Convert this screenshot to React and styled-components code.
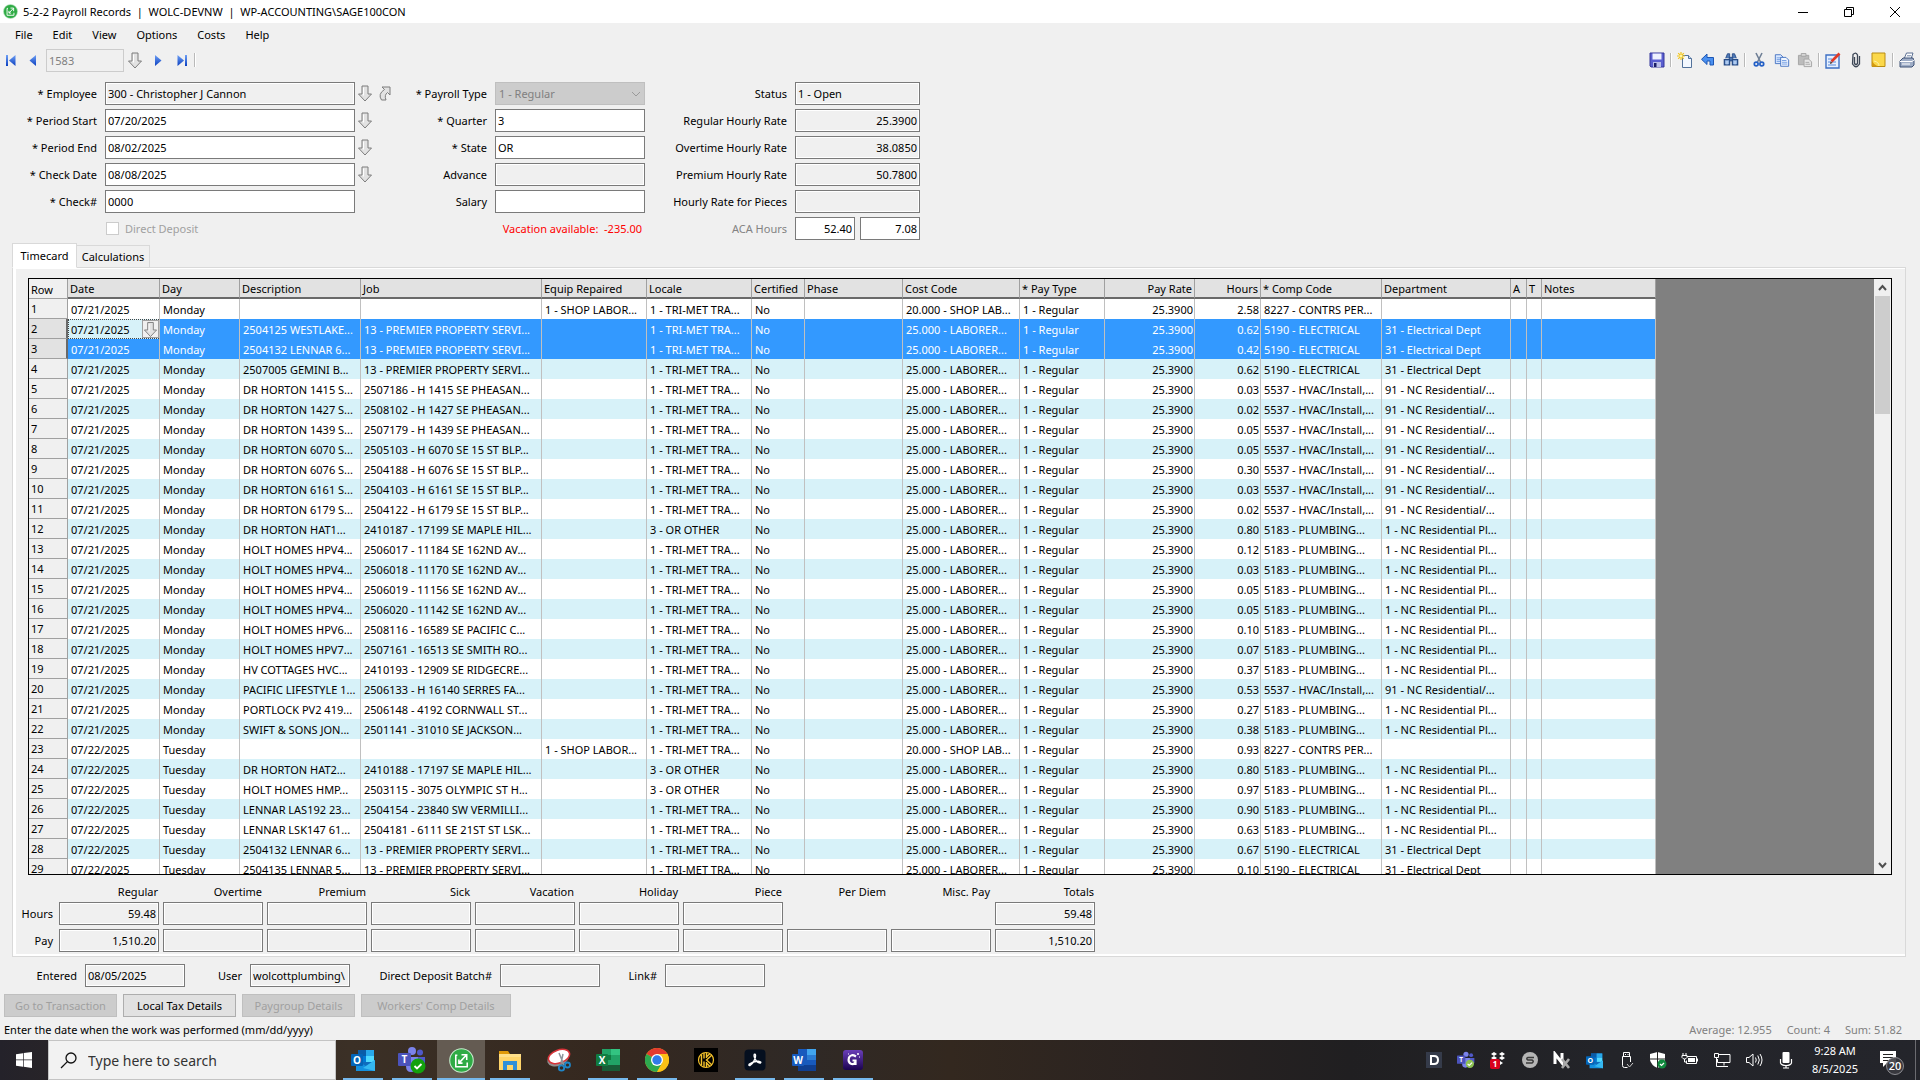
import React from "react";
import styled, { createGlobalStyle, css } from "styled-components";

const Global = createGlobalStyle`
  * { box-sizing: border-box; }
  body { margin: 0; background: #f0f0f0; }
  body, button, input, select, table {
    font-family: "Noto Sans", "Open Sans", sans-serif;
    font-size: 11px;
    line-height: 16px;
    color: #000;
  }
`;

const Window = styled.div`
  display: flex;
  flex-direction: column;
  height: 100vh;
  overflow: hidden;
  background: #f0f0f0;
  white-space: pre;
`;

/* ---------- title, menu, toolbar ---------- */
const TitleBar = styled.header`
  display: flex;
  align-items: center;
  flex: none;
  height: 23px;
  padding-left: 3px;
  gap: 5px;
  background: #fff;
`;
const Title = styled.h1`
  flex: 1;
  margin: 0;
  font-size: 11px;
  font-weight: 400;
`;
const CaptionButtons = styled.div`
  display: flex;
  padding-right: 2px;
`;
const CaptionButton = styled.button`
  display: flex;
  align-items: center;
  justify-content: center;
  width: 46px;
  height: 20px;
  padding: 0;
  border: 0;
  background: none;
`;
const MenuBar = styled.nav`
  display: flex;
  align-items: center;
  flex: none;
  height: 24px;
  padding-left: 5px;
`;
const MenuItem = styled.button`
  padding: 0 10px;
  border: 0;
  background: none;
`;
const Toolbar = styled.div`
  display: flex;
  align-items: center;
  flex: none;
  height: 26px;
  padding: 0 2px;
`;
const ToolButton = styled.button`
  display: flex;
  align-items: center;
  justify-content: center;
  flex: none;
  width: ${(p) => p.$w || 23}px;
  height: 22px;
  padding: 0;
  border: 0;
  background: none;
`;
const ToolSeparator = styled.span`
  width: 1px;
  height: 14px;
  margin: 0 2px;
  background: #b9b9b9;
  box-shadow: 1px 0 #fff;
`;
const Spacer = styled.span`
  flex: 1;
`;

/* ---------- fields ---------- */
const Field = styled.input`
  display: block;
  width: ${(p) => (p.$w ? `${p.$w}px` : "100%")};
  height: 23px;
  min-width: 0;
  padding: 0 2px;
  border: 1px solid #7a7a7a;
  border-radius: 0;
  outline: none;
  background: #fff;
  text-align: ${(p) => (p.$right ? "right" : "left")};
  ${(p) => p.readOnly && css`background: #f0f0f0; box-shadow: inset 0 0 0 1px #fff;`}
  &:disabled { border-color: #ccc; color: #808080; background: #f0f0f0; }
`;
const Label = styled.label`
  padding-right: 8px;
  text-align: right;
  color: ${(p) => (p.$muted ? "#838383" : "#000")};
`;
const Form = styled.section`
  display: flex;
  flex: none;
  padding-top: 9px;
`;
const FormColumn = styled.div`
  display: grid;
  grid-template-columns: ${(p) => p.$cols};
  grid-auto-rows: 23px;
  row-gap: 4px;
  align-items: center;
`;
const Lookups = styled.div`
  display: flex;
`;
const LookupButton = styled.button`
  display: flex;
  align-items: center;
  justify-content: center;
  width: 20px;
  height: 20px;
  padding: 0;
  border: 0;
  background: none;
`;
const SelectBox = styled.span`
  display: grid;
  align-items: center;
  height: 23px;
  > * { grid-area: 1 / 1; }
  > svg { justify-self: end; margin-right: 4px; }
`;
const Select = styled.select`
  width: 100%;
  height: 23px;
  padding: 0 3px;
  appearance: none;
  border: 1px solid #bfbfbf;
  border-radius: 0;
  background: #ccc;
  color: #808080;
  opacity: 1;
`;
const Notice = styled.span`
  padding-right: 3px;
  text-align: right;
  color: #f00;
`;
const CheckLabel = styled.label`
  display: flex;
  align-items: center;
  gap: 6px;
  color: #a0a0a0;
`;
const CheckBox = styled.input`
  width: 13px;
  height: 13px;
  margin: 0 0 0 1px;
  appearance: none;
  border: 1px solid #ccc;
  background: #fff;
`;
const Pair = styled.div`
  display: flex;
  gap: 5px;
`;

/* ---------- tabs and panel ---------- */
const Tabs = styled.div`
  display: flex;
  align-items: flex-end;
  flex: none;
  margin: 3px 0 -1px 12px;
`;
const Tab = styled.button`
  position: relative;
  height: ${(p) => (p.$active ? 25 : 23)}px;
  width: ${(p) => (p.$active ? 65 : 73)}px;
  padding: 0;
  border: 1px solid #d9d9d9;
  border-left-width: ${(p) => (p.$active ? 1 : 0)}px;
  border-bottom-color: ${(p) => (p.$active ? "#fff" : "#d9d9d9")};
  background: ${(p) => (p.$active ? "#fff" : "#f0f0f0")};
`;
const Panel = styled.section`
  display: flex;
  flex: 1;
  flex-direction: column;
  min-height: 0;
  margin: 0 14px 0 12px;
  padding: 10px 13px 0 12px;
  border: 1px solid #d9d9d9;
  box-shadow: inset 0 -2px #fff, inset 3px 1px #fff;
`;
const GridFrame = styled.div`
  display: flex;
  flex: 1;
  min-height: 0;
  margin-left: 3px;
  border: 1px solid #000;
  background: #808080;
`;
const GridView = styled.div`
  flex: 1;
  overflow: hidden;
`;
const Table = styled.table`
  width: 1627px;
  table-layout: fixed;
  border-collapse: separate;
  border-spacing: 0;
`;
const HeadCell = styled.th`
  height: 20px;
  padding: 2px 2px 0;
  overflow: hidden;
  border-right: 1px solid #a0a0a0;
  border-bottom: 2px solid #696969;
  background: #e2e2e2;
  font-weight: 400;
  text-align: ${(p) => (p.$right ? "right" : "left")};
  ${(p) => p.$corner && css`background: #f0f0f0; border-bottom: 1px solid #a0a0a0;`}
`;
const RowHead = styled.th`
  height: 20px;
  padding: 0 2px;
  border-right: 1px solid #a0a0a0;
  border-bottom: 1px solid #a0a0a0;
  background: #f0f0f0;
  font-weight: 400;
  text-align: left;
  ${(p) => p.$selected && css`background: #e2e2e2; border-right: 2px solid #696969;`}
`;
const Cell = styled.td`
  height: 20px;
  padding: ${(p) => (p.$right ? "2px 1px 0 0" : p.$edit ? "0" : "2px 0 0 3px")};
  overflow: hidden;
  border-right: 1px solid #c0c0c0;
  text-align: ${(p) => (p.$right ? "right" : "left")};
`;
const Row = styled.tr`
  > td { background: #fff; }
  &:nth-child(even) > td { background: #d7f2f9; }
  &&[aria-selected="true"] > td { background: #39f; color: #fff; }
`;
const CellEditor = styled.div`
  display: flex;
  height: 20px;
  border: 1px dotted #444;
  border-right: 0;
  background: #d7f2f9;
`;
const CellInput = styled.input`
  flex: 1;
  min-width: 0;
  padding: 1px 2px 0;
  border: 0;
  outline: none;
  background: none;
`;
const CellButton = styled.button`
  display: flex;
  align-items: center;
  justify-content: center;
  width: 17px;
  padding: 0;
  border: 1px solid #a0a0a0;
  background: #f0f0f0;
`;
const ScrollBar = styled.div`
  display: flex;
  flex-direction: column;
  align-items: center;
  width: 17px;
  background: #f0f0f0;
`;
const ScrollArrow = styled.button`
  display: flex;
  align-items: center;
  justify-content: center;
  width: 17px;
  height: 17px;
  padding: 0;
  border: 0;
  background: none;
`;
const ScrollThumb = styled.div`
  width: 15px;
  height: 118px;
  background: #cdcdcd;
`;

/* ---------- totals and footer ---------- */
const Totals = styled.table`
  width: 1076px;
  margin: 6px 0 0 -6px;
  flex: none;
  table-layout: fixed;
  border-collapse: separate;
  border-spacing: 0;
  align-self: flex-start;
  th { font-weight: 400; text-align: right; }
  td { padding: 0 0 4px 4px; }
  thead th { height: 21px; padding: 0 1px 0 0; }
  tbody th { padding: 0 2px 4px 0; }
`;
const Footer = styled.section`
  display: flex;
  align-items: center;
  flex: none;
  height: 37px;
`;
const FooterLabel = styled(Label)`
  width: ${(p) => p.$w}px;
`;
const Actions = styled.div`
  display: flex;
  flex: none;
  gap: 6px;
  padding-left: 4px;
`;
const Action = styled.button`
  width: ${(p) => p.$w || 113}px;
  height: 23px;
  padding: 0;
  border: 1px solid #adadad;
  background: #e1e1e1;
  &:disabled { border-color: #bfbfbf; background: #ccc; color: #a0a0a0; }
`;
const StatusBar = styled.footer`
  display: flex;
  align-items: center;
  flex: none;
  gap: 15px;
  height: 23px;
  padding: 3px 18px 0 4px;
  color: #808080;
`;
const Hint = styled.span`
  flex: 1;
  color: #000;
`;

/* ---------- task bar ---------- */
const TaskBar = styled.div`
  display: flex;
  flex: none;
  height: 40px;
  background: linear-gradient(90deg, #24222a 0, #2c2625 120px, #3b3026 350px, #35281f 600px, #2f2926 800px, #33281f 950px, #2a2321 1150px, #201f21 1350px, #232429 1600px, #24252b);
`;
const StartButton = styled.button`
  display: flex;
  align-items: center;
  justify-content: center;
  width: 48px;
  padding: 0;
  border: 0;
  background: none;
`;
const SearchBox = styled.label`
  display: flex;
  align-items: center;
  gap: 11px;
  width: 288px;
  padding-left: 11px;
  border: 1px solid #c4c4c4;
  background: #f2f2f2;
`;
const SearchInput = styled.input`
  flex: 1;
  min-width: 0;
  padding: 2px 0 0;
  border: 0;
  outline: none;
  background: none;
  font-size: 14px;
  line-height: 20px;
  &::placeholder { color: #333; opacity: 1; }
`;
const Apps = styled.div`
  display: flex;
  flex: 1;
  gap: 1px;
  padding-left: 3px;
`;
const AppButton = styled.button`
  display: flex;
  align-items: center;
  justify-content: center;
  width: 48px;
  padding: 2px 0 0;
  border: 0;
  border-bottom: 2px solid transparent;
  background: ${(p) => (p.$active ? "#645b52" : "none")};
  ${(p) => p.$running && css`
    background-image: linear-gradient(#76b9ed, #76b9ed);
    background-repeat: no-repeat;
    background-origin: border-box;
    background-clip: border-box;
    background-position: center bottom;
    background-size: ${p.$active ? "100%" : "40px"} 2px;
  `}
`;
const Tray = styled.div`
  display: flex;
  align-items: center;
`;
const TrayButton = styled.button`
  display: flex;
  align-items: center;
  justify-content: center;
  width: 32px;
  height: 40px;
  padding: 0;
  border: 0;
  background: none;
`;
const Clock = styled.time`
  width: 66px;
  line-height: 18px;
  text-align: center;
  color: #fff;
`;
const Notifications = styled.button`
  display: flex;
  align-items: center;
  justify-content: flex-end;
  width: 48px;
  height: 40px;
  padding: 3px 9px 0 0;
  border: 0;
  border-right: 1px solid #6b6b70;
  margin-right: 4px;
  background: none;
`;

const iconFont = '"Open Sans", sans-serif';

/* ---------- icons ---------- */
const SageIcon = ({ size }) => (
  <svg width={size} height={size} viewBox="0 0 24 24">
    <circle cx="12" cy="12" r="11.3" fill="#2fab45" stroke="#c9ecd0" strokeWidth="1" />
    <path d="M8 7H6.500v11h11v-4" fill="none" stroke="#fff" strokeWidth="1.500" />
    <path d="M9.500 14.500 16.500 7M12 6.500h5v5M9.500 11v3.500H13" fill="none" stroke="#fff" strokeWidth="1.500" />
  </svg>
);
const DownArrow = () => (
  <svg width="16" height="17" viewBox="0 0 16 17">
    <path d="M5 1h6v8h3.500L8 16 1.500 9H5z" fill="#e2e2e2" stroke="#7d7d7d" />
    <path d="M6.500 2.500v8" stroke="#fff" />
  </svg>
);
const JumpArrow = () => (
  <svg width="14" height="17" viewBox="0 0 14 17">
    <path d="M4 2h8v8L9.500 7.500Q6 10 8 15H3.500Q-.5 9 6.500 4.500z" fill="#e2e2e2" stroke="#7d7d7d" />
  </svg>
);
const Chevron = () => (
  <svg width="10" height="6" viewBox="0 0 10 6"><path d="M1 1l4 4 4-4" fill="none" stroke="#9a9a9a" /></svg>
);
const NavIcon = ({ bar, flip }) => (
  <svg width="12" height="13" viewBox="0 0 12 13">
    <defs><linearGradient id="nav" x2="0" y2="1"><stop offset="0" stopColor="#6fa0f5" /><stop offset="1" stopColor="#0a3fc0" /></linearGradient></defs>
    <g transform={flip ? "matrix(-1 0 0 1 12 0)" : undefined}>
      {bar && <path d="M1 1h2v11H1z" fill="url(#nav)" />}
      <path d={bar ? "M10.500 1v11L4 6.500z" : "M9 1v11L2.500 6.500z"} fill="url(#nav)" />
    </g>
  </svg>
);
const SaveIcon = () => (
  <svg width="16" height="16" viewBox="0 0 16 16">
    <path d="M1 1h14v14H2l-1-1z" fill="#5a5fd0" stroke="#34379a" />
    <path d="M3.500 1.500h9v6h-9z" fill="#eef1ff" /><path d="M4 10h8v5H4z" fill="#b9bde8" /><path d="M5 11h2.500v4H5z" fill="#1b1e66" />
  </svg>
);
const NewIcon = () => (
  <svg width="16" height="16" viewBox="0 0 16 16">
    <path d="M5.500 3.500h6l3 3v9h-9z" fill="#f3f8ff" stroke="#53729b" /><path d="M11.500 3.500v3h3" fill="#c5d8ef" stroke="#53729b" />
    <path d="M4 0v8M0 4h8M1.200 1.200l5.600 5.600M6.800 1.200 1.200 6.800" stroke="#f2c418" strokeWidth="1.200" /><circle cx="4" cy="4" r="1.500" fill="#fff6a8" />
  </svg>
);
const UndoIcon = () => (
  <svg width="16" height="16" viewBox="0 0 16 16"><path d="M7 2v3.500h6.500V13H10V9H7v3.500L1.500 7.300z" fill="#4a90f0" stroke="#1d56b4" /></svg>
);
const FindIcon = () => (
  <svg width="16" height="16" viewBox="0 0 18 16">
    <path d="M3 6 5 1h2.500v5M15 6l-2-5h-2.500v5M7 5h4v4H7z" fill="#4f79b5" stroke="#264b86" />
    <path d="M1.500 7.500h6v6h-6zM10.500 7.500h6v6h-6z" fill="#8fb2e2" stroke="#264b86" strokeWidth="1.400" /><path d="M4.500 9v4M13.500 9v4" stroke="#dcebff" />
  </svg>
);
const CutIcon = () => (
  <svg width="14" height="16" viewBox="0 0 14 16">
    <path d="M4 1l4.500 9M10 1 5.500 10" stroke="#6f7f96" strokeWidth="1.600" />
    <circle cx="4.200" cy="12" r="1.900" fill="none" stroke="#2460c6" strokeWidth="1.700" /><circle cx="9.800" cy="12" r="1.900" fill="none" stroke="#2460c6" strokeWidth="1.700" />
  </svg>
);
const CopyIcon = () => (
  <svg width="16" height="15" viewBox="0 0 18 16">
    <path d="M1.500 1.500h6l3 3v7h-9z" fill="#dbe9ff" stroke="#3f6fc0" /><path d="M3 5h5M3 7h5M3 9h5" stroke="#6d9ae0" />
    <path d="M7.500 4.500h6l3 3v7h-9z" fill="#f0f6ff" stroke="#3f6fc0" /><path d="M9 8h5M9 10h6M9 12h6" stroke="#6d9ae0" />
  </svg>
);
const PasteIcon = () => (
  <svg width="16" height="15" viewBox="0 0 17 16">
    <path d="M1.500 2.500h11v10h-11z" fill="#bcbcbc" stroke="#a4a4a4" /><path d="M4.500.5h5v3h-5z" fill="#d6d6d6" stroke="#a4a4a4" />
    <path d="M7.500 6.500h5l3 3v5h-8z" fill="#e6e6e6" stroke="#a4a4a4" /><path d="M9 10h4M9 12h5" stroke="#aaa" />
  </svg>
);
const NoteEditIcon = () => (
  <svg width="16" height="17" viewBox="0 0 16 17">
    <path d="M1 3h13v13H1z" fill="#e6f0ff" stroke="#3d6fc4" strokeWidth="1.400" /><path d="M3 7h4M3 10h8M3 13h8" stroke="#5a8ad8" />
    <path d="M6.500 9.500 14.500 1.500" stroke="#e03a28" strokeWidth="2.600" /><path d="M5 12l.6-2.400L7.500 11z" fill="#4a2a10" />
  </svg>
);
const ClipIcon = () => (
  <svg width="10" height="16" viewBox="0 0 10 16"><path d="M3.500 5v6.500q1.500 2 3 0V3Q5-.5 2 2.500L1.500 12Q5 17.500 8.500 12V4" fill="none" stroke="#3d4756" strokeWidth="1.300" /></svg>
);
const StickyIcon = () => (
  <svg width="15" height="16" viewBox="0 0 15 16"><path d="M1 1h13v13.500H1z" fill="#fbd84a" stroke="#b98c12" /><path d="M1 9q2 4 6 5.500H1z" fill="#d39a10" /><path d="M3 9q5 1 5 5" fill="none" stroke="#fff1a6" /></svg>
);
const PrintIcon = () => (
  <svg width="16" height="16" viewBox="0 0 16 16">
    <path d="M5 7 7.500 1H14l-2 6" fill="#fff" stroke="#5b6f92" /><path d="M1 9l3-3h10l1 3v4l-2 2H1z" fill="#9fadc6" stroke="#3f5276" />
    <path d="M1 9.500h12l2-1.500M3 12h8" fill="none" stroke="#fff" /><path d="M8 3.500h4M7.500 5h4" stroke="#9aa8c0" />
  </svg>
);
const ScrollGlyph = ({ d }) => (
  <svg width="9" height="7" viewBox="0 0 9 7"><path d={d} fill="none" stroke="#505050" strokeWidth="2" /></svg>
);

const OutlookIcon = ({ size }) => (
  <svg width={size} height={size} viewBox="0 0 24 24">
    <path d="M7 2h16v18H7z" fill="#0f6cbd" /><path d="M7 2h8v6H7z" fill="#0a5ca8" /><path d="M15 2h8v6h-8z" fill="#28a8ea" /><path d="M15 8h8v6h-8z" fill="#50d9ff" /><path d="M7 8h8v6H7z" fill="#0078d4" />
    <path d="M5 12l10 6 9-6v11H5z" fill="#1490df" /><path d="M24 12 12 20l12 3z" fill="#35b8f1" />
    <rect y="6" width="12" height="12" rx="1" fill="#0364b8" /><text x="6" y="15.500" fontFamily={iconFont} fontWeight="700" fontSize="10" fill="#fff" textAnchor="middle">O</text>
  </svg>
);
const TeamsIcon = ({ size, small }) => (
  <svg width={size} height={size} viewBox="0 0 28 28">
    <circle cx="14" cy="5" r="4" fill="#7b83eb" /><circle cx="22" cy="6.500" r="3" fill="#5059c9" /><path d="M17 11h10v7q-2 6-8 4z" fill="#5059c9" /><path d="M8 11h12v9q-1 6-7 6-5 0-5-6z" fill="#7b83eb" />
    <rect y="7" width="13" height="13" rx="1" fill="#4b53bc" /><text x="6.500" y="17" fontFamily={iconFont} fontWeight="700" fontSize="10" fill="#fff" textAnchor="middle">T</text>
    <circle cx="20" cy="20" r={small ? 6.5 : 7.5} fill={small ? "#8cc152" : "#13a10e"} /><path d="M16.500 20l2.500 2.500 4.500-4.500" fill="none" stroke="#fff" strokeWidth="1.800" />
  </svg>
);
const FolderIcon = () => (
  <svg width="24" height="24" viewBox="0 0 24 24">
    <path d="M1 3h9l2 3H1z" fill="#e09a0a" /><path d="M1 6h22v16H1z" fill="#ffd56a" /><path d="M1 6h22v3H1z" fill="#ffe08a" /><path d="M5 22v-9h14v9h-4v-5H9v5z" fill="#2f8fd8" />
  </svg>
);
const SnipIcon = () => (
  <svg width="24" height="24" viewBox="0 0 24 24">
    <ellipse cx="11" cy="11" rx="11" ry="7" transform="rotate(-20 11 11)" fill="#8f8f8f" /><ellipse cx="12" cy="8.500" rx="11" ry="6.500" transform="rotate(-20 12 8.500)" fill="#fff" stroke="#d8343a" strokeWidth="1.600" />
    <path d="M12 5l5 12M16 6l-2 9" stroke="#8d959c" strokeWidth="1.500" /><circle cx="14.500" cy="20" r="2.700" fill="none" stroke="#1f86c8" strokeWidth="1.800" /><circle cx="20.500" cy="17" r="2.500" fill="none" stroke="#1f86c8" strokeWidth="1.800" />
  </svg>
);
const OfficeIcon = ({ letter, c }) => (
  <svg width="24" height="24" viewBox="0 0 24 24">
    <path d="M6 1h18v22H6z" fill={c[0]} /><path d="M15 1h9v6h-9z" fill={c[1]} /><path d="M6 7h9v5H6z" fill={c[2]} /><path d="M15 7h9v5h-9z" fill={c[3]} /><path d="M6 17h18v6H6z" fill={c[4]} />
    <rect y="6" width="12" height="12" rx="1" fill={c[2]} /><text x="6" y="15.600" fontFamily={iconFont} fontWeight="700" fontSize="10" fill="#fff" textAnchor="middle">{letter}</text>
  </svg>
);
const ChromeIcon = () => (
  <svg width="24" height="24" viewBox="0 0 24 24">
    <circle cx="12" cy="12" r="12" fill="#fbc116" /><path d="M12 12 1.600 6A12 12 0 0 1 22.400 6H12z" fill="#e33b2e" /><path d="M12 12 1.600 6A12 12 0 0 0 12 24l5.200-9z" fill="#2da94f" /><path d="M12 6h10.400A12 12 0 0 1 12 24l5.200-9z" fill="#fbc116" />
    <circle cx="12" cy="12" r="6" fill="#fff" /><circle cx="12" cy="12" r="4.700" fill="#2f7bea" />
  </svg>
);
const KeeperIcon = () => (
  <svg width="24" height="24" viewBox="0 0 24 24">
    <path d="M0 0h24v24H0z" fill="#000" /><circle cx="12" cy="12" r="7.500" fill="none" stroke="#f5c32c" strokeWidth="1.200" />
    <path d="M7.500 6.500v11M10 5v5.500M10 13.500V19M12.500 14v5M12.500 5v5M18 7l-5.500 5L18 17M16 5.500 12.500 9M16 18.500l-3-3" fill="none" stroke="#f5c32c" strokeWidth="1.400" />
  </svg>
);
const AcrobatIcon = () => (
  <svg width="24" height="24" viewBox="0 0 24 24">
    <rect x="1.500" y="1.500" width="21" height="21" rx="4" fill="#050f1f" />
    <path d="M11 6.500q2.200-1 1.300 3-1.600 5.500-5.300 8-1.800.3-.6-1.500 4-3 9-2.800 3.500.6 2 1.800-2 .5-4.400-2.500Q10.500 9 11 6.500" fill="none" stroke="#fff" strokeWidth="1.400" />
  </svg>
);
const GIcon = () => (
  <svg width="24" height="24" viewBox="0 0 24 24">
    <defs><linearGradient id="gbg" x2="0" y2="1"><stop offset="0" stopColor="#6a3fb8" /><stop offset="1" stopColor="#1b0350" /></linearGradient></defs>
    <rect x="2" y="2" width="20" height="20" rx="3" fill="url(#gbg)" /><path d="M15 8.500q-5-3-7 1-1.500 5 2.500 6.500 4 .6 4-3.500h-3M14.500 12.500V17" fill="none" stroke="#fff" strokeWidth="2.200" />
    <path d="M17 5v2M16 6h2M7 6h1M18 9h1" stroke="#fff" />
  </svg>
);
const WindowsIcon = () => (
  <svg width="16" height="16" viewBox="0 0 16 16"><path d="M0 2.300 7 1.200v6.300H0zM7.700 1.100 16 0v7.500H7.700zM0 8.300h7v6.400L0 13.700zM7.700 8.300H16V16l-8.300-1.200z" fill="#fff" /></svg>
);
const SearchIcon = () => (
  <svg width="17" height="17" viewBox="0 0 17 17"><circle cx="11" cy="6" r="5" fill="none" stroke="#111" strokeWidth="1.300" /><path d="M7.400 9.600 1 16" stroke="#111" strokeWidth="1.300" /></svg>
);

const TrayGlyph = ({ children }) => <svg width="18" height="18" viewBox="0 0 18 18">{children}</svg>;
const trayIcons = [
  ["Dashlane", <TrayGlyph><path d="M1 1h16v16H1z" fill="#353b4a" /><path d="M6 5h3q4 0 4 4t-4 4H6z" fill="none" stroke="#fff" strokeWidth="2" /></TrayGlyph>],
  ["Teams", <TeamsIcon size={18} small />],
  ["Dropbox", <TrayGlyph><path d="M5 1l3 2-3 2-3-2zM13 1l3 2-3 2-3-2zM5 5l3 2-3 2-3-2zM13 5l3 2-3 2-3-2zM11 10l3 2-3 2z" fill="#fff" /><rect x="1" y="8" width="10" height="10" rx="2" fill="#d8001d" /><text x="6" y="16" fontFamily={iconFont} fontSize="8" fontWeight="700" fill="#fff" textAnchor="middle">1</text></TrayGlyph>],
  ["Sync", <TrayGlyph><circle cx="9" cy="9" r="8" fill="#b5b5b5" /><path d="M13 6.500H7q-2.500 1 0 2.500h4q2.500 1.500 0 3H5" fill="none" stroke="#3a3a3a" strokeWidth="1.500" /></TrayGlyph>],
  ["Nx", <TrayGlyph><path d="M2 13V3l7 9V2" fill="none" stroke="#fff" strokeWidth="3" /><path d="M9 8l7 9M16 8 9 17" stroke="#a9a9a9" strokeWidth="2.600" /></TrayGlyph>],
  ["Outlook", <OutlookIcon size={17} />],
  ["Safely remove hardware", <TrayGlyph><path d="M6.500 5.500v-4h6v4M5.500 5.500h8V11M5.500 5.500v9q0 2 2 2h3M8 3.500h1M10.500 3.500h1" fill="none" stroke="#fff" /><path d="M10 13l2.500 3L16 12" fill="none" stroke="#ccc" /></TrayGlyph>],
  ["Windows Security", <TrayGlyph><path d="M8.500 1 16 3v6q-1 5-7.500 8Q2 14 1 9V3z" fill="#fff" /><path d="M8.500 1v16M1 8h15" stroke="#222" /><circle cx="13" cy="13" r="4.500" fill="#10893e" /><path d="M11 13l1.500 1.500L15 12" fill="none" stroke="#fff" strokeWidth="1.200" /></TrayGlyph>],
  ["Battery", <TrayGlyph><path d="M6 5.500h9.500v7H5.500v-3" fill="none" stroke="#fff" /><path d="M7 7h7v4H7zM16 7.500h1v3h-1z" fill="#fff" /><path d="M2 2v2M5 2v2M1 4.500h5v2q-1 1.500-2.500 1.500T1 6.500zM3.500 8v3H6" fill="none" stroke="#fff" /></TrayGlyph>],
  ["Network", <TrayGlyph><path d="M6 3.500h11v8H4.500V8M11 11.500v3M7 15.500h8M1.500 2.500h4v4h-4zM3.500 6.500v9H7" fill="none" stroke="#fff" /></TrayGlyph>],
  ["Volume", <TrayGlyph><path d="M1.500 6.500H4L8 3v12l-4-3.500H1.500zM10.500 6.500q1.500 2.500 0 5M12.800 4.500q3 4.500 0 9M15 3q4 6 0 12" fill="none" stroke="#fff" /></TrayGlyph>],
  ["Microphone", <TrayGlyph><rect x="5.500" y="1" width="7" height="11" rx="1" fill="#fff" /><path d="M3.500 8v4q1 2.500 5.500 2.500t5.500-2.500V8M9 14.500V17M6 17h6" fill="none" stroke="#fff" strokeWidth="1.200" /></TrayGlyph>],
];

const apps = [
  ["Outlook", <OutlookIcon size={24} />, true],
  ["Teams", <TeamsIcon size={28} />, true],
  ["Sage 100 Contractor", <SageIcon size={25} />, true, true],
  ["File Explorer", <FolderIcon />, true],
  ["Snipping Tool", <SnipIcon />],
  ["Excel", <OfficeIcon letter="X" c={["#21a366", "#33c481", "#107c41", "#21a366", "#185c37"]} />, true],
  ["Chrome", <ChromeIcon />, true],
  ["Keeper", <KeeperIcon />],
  ["Acrobat", <AcrobatIcon />, true],
  ["Word", <OfficeIcon letter="W" c={["#185abd", "#41a5ee", "#185abd", "#2b7cd3", "#103f91"]} />, true],
  ["G", <GIcon />, true],
];

/* ---------- data ---------- */
const columns = [
  ["Row", 39], ["Date", 92], ["Day", 80], ["Description", 121], ["Job", 181], ["Equip Repaired", 105],
  ["Locale", 105], ["Certified", 53], ["Phase", 98], ["Cost Code", 117], ["* Pay Type", 85],
  ["Pay Rate", 90, true], ["Hours", 66, true], ["* Comp Code", 121], ["Department", 129], ["A", 16], ["T", 15], ["Notes", 114],
];
const TRI = "1 - TRI-MET TRA...";
const OTHER = "3 - OR OTHER";
const compCodes = {
  shop: ["8227 - CONTRS PER...", ""],
  elec: ["5190 - ELECTRICAL", "31 - Electrical Dept"],
  hvac: ["5537 - HVAC/Install,...", "91 - NC Residential/..."],
  plumb: ["5183 - PLUMBING...", "1 - NC Residential Pl..."],
};
const records = [
  ["", "", "2.58", "shop"],
  ["2504125 WESTLAKE...", "13 - PREMIER PROPERTY SERVI...", "0.62", "elec"],
  ["2504132 LENNAR 6...", "13 - PREMIER PROPERTY SERVI...", "0.42", "elec"],
  ["2507005 GEMINI B...", "13 - PREMIER PROPERTY SERVI...", "0.62", "elec"],
  ["DR HORTON 1415 S...", "2507186 - H 1415 SE PHEASAN...", "0.03", "hvac"],
  ["DR HORTON 1427 S...", "2508102 - H 1427 SE PHEASAN...", "0.02", "hvac"],
  ["DR HORTON 1439 S...", "2507179 - H 1439 SE PHEASAN...", "0.05", "hvac"],
  ["DR HORTON 6070 S...", "2505103 - H 6070 SE 15 ST BLP...", "0.05", "hvac"],
  ["DR HORTON 6076 S...", "2504188 - H 6076 SE 15 ST BLP...", "0.30", "hvac"],
  ["DR HORTON 6161 S...", "2504103 - H 6161 SE 15 ST BLP...", "0.03", "hvac"],
  ["DR HORTON 6179 S...", "2504122 - H 6179 SE 15 ST BLP...", "0.02", "hvac"],
  ["DR HORTON HAT1...", "2410187 - 17199 SE MAPLE HIL...", "0.80", "plumb", OTHER],
  ["HOLT HOMES HPV4...", "2506017 - 11184 SE 162ND AV...", "0.12", "plumb"],
  ["HOLT HOMES HPV4...", "2506018 - 11170 SE 162ND AV...", "0.03", "plumb"],
  ["HOLT HOMES HPV4...", "2506019 - 11156 SE 162ND AV...", "0.05", "plumb"],
  ["HOLT HOMES HPV4...", "2506020 - 11142 SE 162ND AV...", "0.05", "plumb"],
  ["HOLT HOMES HPV6...", "2508116 - 16589 SE PACIFIC C...", "0.10", "plumb"],
  ["HOLT HOMES HPV7...", "2507161 - 16513 SE SMITH RO...", "0.07", "plumb"],
  ["HV COTTAGES HVC...", "2410193 - 12909 SE RIDGECRE...", "0.37", "plumb"],
  ["PACIFIC LIFESTYLE 1...", "2506133 - H 16140 SERRES FA...", "0.53", "hvac"],
  ["PORTLOCK PV2 419...", "2506148 - 4192 CORNWALL ST...", "0.27", "plumb"],
  ["SWIFT & SONS JON...", "2501141 - 31010 SE JACKSON...", "0.38", "plumb"],
  ["", "", "0.93", "shop"],
  ["DR HORTON HAT2...", "2410188 - 17197 SE MAPLE HIL...", "0.80", "plumb", OTHER],
  ["HOLT HOMES HMP...", "2503115 - 3075 OLYMPIC ST H...", "0.97", "plumb", OTHER],
  ["LENNAR LAS192 23...", "2504154 - 23840 SW VERMILLI...", "0.90", "plumb"],
  ["LENNAR LSK147 61...", "2504181 - 6111 SE 21ST ST LSK...", "0.63", "plumb"],
  ["2504132 LENNAR 6...", "13 - PREMIER PROPERTY SERVI...", "0.67", "elec"],
  ["2504135 LENNAR 5...", "13 - PREMIER PROPERTY SERVI...", "0.10", "elec"],
];

const totalHeads = ["Regular", "Overtime", "Premium", "Sick", "Vacation", "Holiday", "Piece", "Per Diem", "Misc. Pay", "Totals"];
const totalRows = [
  ["Hours", ["59.48", "", "", "", "", "", "", null, null, "59.48"]],
  ["Pay", ["1,510.20", "", "", "", "", "", "", "", "", "1,510.20"]],
];

const leftFields = [
  ["* Employee", "300 - Christopher J Cannon", true, 2],
  ["* Period Start", "07/20/2025", false, 1],
  ["* Period End", "08/02/2025", false, 1],
  ["* Check Date", "08/08/2025", false, 1],
  ["* Check#", "0000", false, 0],
];
const middleFields = [["* Quarter", "3"], ["* State", "OR"], ["Advance", "", true], ["Salary", ""]];
const rateFields = [
  ["Regular Hourly Rate", "25.3900"], ["Overtime Hourly Rate", "38.0850"],
  ["Premium Hourly Rate", "50.7800"], ["Hourly Rate for Pieces", ""],
];
const idOf = (s) => s.replace(/[^A-Za-z]+/g, "-").toLowerCase();

function TimecardRow({ n, record }) {
  const [desc, job, hours, kind, locale = TRI] = record;
  const date = n < 23 ? "07/21/2025" : "07/22/2025";
  const shop = kind === "shop";
  const selected = n === 2 || n === 3;
  return (
    <Row aria-selected={selected}>
      <RowHead scope="row" $selected={selected}>{n}</RowHead>
      {n === 2 ? (
        <Cell $edit>
          <CellEditor>
            <CellInput aria-label="Date" defaultValue={date} />
            <CellButton aria-label="Pick date"><DownArrow /></CellButton>
          </CellEditor>
        </Cell>
      ) : <Cell>{date}</Cell>}
      <Cell>{n < 23 ? "Monday" : "Tuesday"}</Cell>
      <Cell>{desc}</Cell>
      <Cell>{job}</Cell>
      <Cell>{shop ? "1 - SHOP LABOR..." : ""}</Cell>
      <Cell>{locale}</Cell>
      <Cell>No</Cell>
      <Cell />
      <Cell>{shop ? "20.000 - SHOP LAB..." : "25.000 - LABORER..."}</Cell>
      <Cell>1 - Regular</Cell>
      <Cell $right>25.3900</Cell>
      <Cell $right>{hours}</Cell>
      <Cell>{compCodes[kind][0]}</Cell>
      <Cell>{compCodes[kind][1]}</Cell>
      <Cell /><Cell /><Cell />
    </Row>
  );
}

export default function App() {
  return (
    <>
      <Global />
      <Window>
        <TitleBar>
          <SageIcon size={15} />
          <Title>{"5-2-2 Payroll Records  |  WOLC-DEVNW  |  WP-ACCOUNTING\\SAGE100CON"}</Title>
          <CaptionButtons>
            <CaptionButton aria-label="Minimize"><svg width="10" height="10"><path d="M0 5.500h10" stroke="#000" /></svg></CaptionButton>
            <CaptionButton aria-label="Restore"><svg width="10" height="10"><path d="M.5 2.500h7v7h-7zM2.500 2.500v-2h7v7h-2" fill="none" stroke="#000" /></svg></CaptionButton>
            <CaptionButton aria-label="Close"><svg width="10" height="10"><path d="M0 0l10 10M10 0 0 10" stroke="#000" /></svg></CaptionButton>
          </CaptionButtons>
        </TitleBar>
        <MenuBar>
          {["File", "Edit", "View", "Options", "Costs", "Help"].map((m) => <MenuItem key={m}>{m}</MenuItem>)}
        </MenuBar>
        <Toolbar>
          <ToolButton $w={18} aria-label="First record"><NavIcon bar /></ToolButton>
          <ToolButton $w={26} aria-label="Previous record"><NavIcon /></ToolButton>
          <Field $w={78} disabled defaultValue="1583" aria-label="Record number" />
          <ToolButton $w={21} aria-label="Look up record"><DownArrow /></ToolButton>
          <ToolButton $w={26} aria-label="Next record"><NavIcon flip /></ToolButton>
          <ToolButton $w={21} aria-label="Last record"><NavIcon bar flip /></ToolButton>
          <ToolSeparator />
          <Spacer />
          <ToolButton aria-label="Save"><SaveIcon /></ToolButton>
          <ToolSeparator />
          <ToolButton aria-label="New"><NewIcon /></ToolButton>
          <ToolButton aria-label="Undo"><UndoIcon /></ToolButton>
          <ToolButton aria-label="Find"><FindIcon /></ToolButton>
          <ToolSeparator />
          <ToolButton aria-label="Cut"><CutIcon /></ToolButton>
          <ToolButton aria-label="Copy"><CopyIcon /></ToolButton>
          <ToolButton aria-label="Paste"><PasteIcon /></ToolButton>
          <ToolSeparator />
          <ToolButton aria-label="Edit note"><NoteEditIcon /></ToolButton>
          <ToolButton aria-label="Attachments"><ClipIcon /></ToolButton>
          <ToolButton aria-label="Notes"><StickyIcon /></ToolButton>
          <ToolSeparator />
          <ToolButton aria-label="Print"><PrintIcon /></ToolButton>
        </Toolbar>

        <Form>
          <FormColumn $cols="105px 250px 45px">
            {leftFields.map(([label, value, ro, lookups]) => (
              <React.Fragment key={label}>
                <Label htmlFor={idOf(label)}>{label}</Label>
                <Field id={idOf(label)} defaultValue={value} readOnly={ro} />
                <Lookups>
                  {lookups > 0 && <LookupButton aria-label={`Look up ${label}`}><DownArrow /></LookupButton>}
                  {lookups > 1 && <LookupButton aria-label="Open employee"><JumpArrow /></LookupButton>}
                </Lookups>
              </React.Fragment>
            ))}
            <span />
            <CheckLabel><CheckBox type="checkbox" disabled />Direct Deposit</CheckLabel>
          </FormColumn>
          <FormColumn $cols="95px 150px">
            <Label htmlFor="payroll-type">* Payroll Type</Label>
            <SelectBox>
              <Select id="payroll-type" disabled><option>1 - Regular</option></Select>
              <Chevron />
            </SelectBox>
            {middleFields.map(([label, value, ro]) => (
              <React.Fragment key={label}>
                <Label htmlFor={idOf(label)}>{label}</Label>
                <Field id={idOf(label)} defaultValue={value} readOnly={ro} />
              </React.Fragment>
            ))}
            <span />
            <Notice>{"Vacation available:  -235.00"}</Notice>
          </FormColumn>
          <FormColumn $cols="150px 125px">
            <Label htmlFor="status">Status</Label>
            <Field id="status" readOnly defaultValue="1 - Open" />
            {rateFields.map(([label, value]) => (
              <React.Fragment key={label}>
                <Label htmlFor={idOf(label)}>{label}</Label>
                <Field id={idOf(label)} $right readOnly defaultValue={value} />
              </React.Fragment>
            ))}
            <Label $muted htmlFor="aca">ACA Hours</Label>
            <Pair>
              <Field id="aca" $right defaultValue="52.40" />
              <Field $right defaultValue="7.08" aria-label="ACA average hours" />
            </Pair>
          </FormColumn>
        </Form>

        <Tabs role="tablist">
          <Tab role="tab" $active aria-selected="true">Timecard</Tab>
          <Tab role="tab" aria-selected="false">Calculations</Tab>
        </Tabs>
        <Panel>
          <GridFrame>
            <GridView>
              <Table>
                <colgroup>{columns.map(([c, w]) => <col key={c} style={{ width: w }} />)}</colgroup>
                <thead>
                  <tr>{columns.map(([c, , right], i) => <HeadCell key={c} scope="col" $right={right} $corner={i === 0}>{c}</HeadCell>)}</tr>
                </thead>
                <tbody>
                  {records.map((r, i) => <TimecardRow key={i} n={i + 1} record={r} />)}
                </tbody>
              </Table>
            </GridView>
            <ScrollBar>
              <ScrollArrow aria-label="Scroll up"><ScrollGlyph d="M1 6l3.500-4L8 6" /></ScrollArrow>
              <ScrollThumb />
              <Spacer />
              <ScrollArrow aria-label="Scroll down"><ScrollGlyph d="M1 1l3.500 4L8 1" /></ScrollArrow>
            </ScrollBar>
          </GridFrame>
          <Totals>
            <colgroup><col style={{ width: 36 }} />{totalHeads.map((h) => <col key={h} style={{ width: 104 }} />)}</colgroup>
            <thead><tr><td />{totalHeads.map((h) => <th key={h} scope="col">{h}</th>)}</tr></thead>
            <tbody>
              {totalRows.map(([name, values]) => (
                <tr key={name}>
                  <th scope="row">{name}</th>
                  {values.map((v, i) => (
                    <td key={i}>{v !== null && <Field readOnly $right defaultValue={v} aria-label={`${totalHeads[i]} ${name}`} />}</td>
                  ))}
                </tr>
              ))}
            </tbody>
          </Totals>
        </Panel>

        <Footer>
          <FooterLabel $w={85} htmlFor="entered">Entered</FooterLabel>
          <Field $w={100} id="entered" readOnly defaultValue="08/05/2025" />
          <FooterLabel $w={65} htmlFor="user">User</FooterLabel>
          <Field $w={100} id="user" readOnly defaultValue="wolcottplumbing\" />
          <FooterLabel $w={150} htmlFor="batch">Direct Deposit Batch#</FooterLabel>
          <Field $w={100} id="batch" readOnly defaultValue="" />
          <FooterLabel $w={65} htmlFor="link">Link#</FooterLabel>
          <Field $w={100} id="link" readOnly defaultValue="" />
        </Footer>
        <Actions>
          <Action disabled>Go to Transaction</Action>
          <Action>Local Tax Details</Action>
          <Action disabled>Paygroup Details</Action>
          <Action disabled $w={150}>Workers' Comp Details</Action>
        </Actions>
        <StatusBar>
          <Hint>Enter the date when the work was performed (mm/dd/yyyy)</Hint>
          <span>Average: 12.955</span>
          <span>Count: 4</span>
          <span>Sum: 51.82</span>
        </StatusBar>

        <TaskBar>
          <StartButton aria-label="Start"><WindowsIcon /></StartButton>
          <SearchBox>
            <SearchIcon />
            <SearchInput placeholder="Type here to search" aria-label="Search" />
          </SearchBox>
          <Apps>
            {apps.map(([name, icon, running, active]) => (
              <AppButton key={name} aria-label={name} $running={running} $active={active}>{icon}</AppButton>
            ))}
          </Apps>
          <Tray>
            {trayIcons.map(([name, icon]) => <TrayButton key={name} aria-label={name}>{icon}</TrayButton>)}
            <Clock>{"9:28 AM\n8/5/2025"}</Clock>
            <Notifications aria-label="20 notifications">
              <svg width="28" height="26" viewBox="0 0 28 26">
                <path d="M2 2h16v12H9l-4 4v-4H2z" fill="#fff" /><path d="M5 5.500h10M5 8.500h10M5 11.500h6" stroke="#222" />
                <circle cx="17" cy="17" r="8.500" fill="#3b3b40" fillOpacity=".9" stroke="#8d8d92" />
                <text x="17" y="21" fontFamily={iconFont} fontSize="11" fontWeight="600" fill="#fff" textAnchor="middle">20</text>
              </svg>
            </Notifications>
          </Tray>
        </TaskBar>
      </Window>
    </>
  );
}
